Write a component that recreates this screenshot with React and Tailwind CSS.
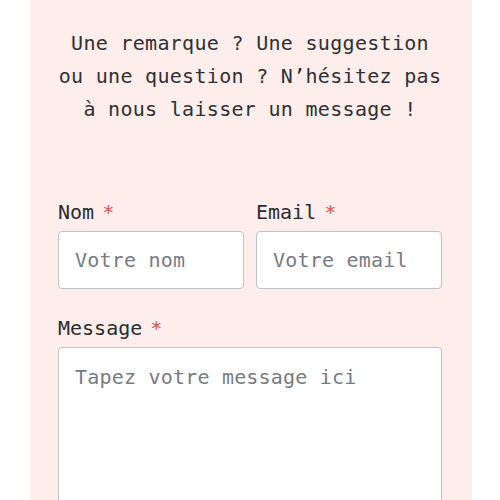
import React from "react";

function Field({ label, children, className = "" }) {
  return (
    <div className={className}>
      <label className="flex items-baseline text-[20px] leading-[28px] text-[#2b2b30] mb-[5px]">
        {label}
        <span className="ml-2 text-[#d9534f]">*</span>
      </label>
      {children}
    </div>
  );
}

function App() {
  return (
    <div className="min-h-screen bg-white font-['DejaVu_Sans_Mono','Liberation_Mono',monospace]">
      <div className="ml-[30px] w-[442px] bg-[#fdeeec] pl-[28px] pr-[30px] pt-[27px] pb-10">
        <p className="text-center whitespace-nowrap text-[20px] leading-[33px] tracking-[0.3px] text-[#303035]">
          Une remarque ? Une suggestion
          <br />
          ou une question ? N’hésitez pas
          <br />
          à nous laisser un message !
        </p>

        <form className="mt-[72px]">
          <div className="grid grid-cols-2 gap-3">
            <Field label="Nom">
              <input
                type="text"
                placeholder="Votre nom"
                className="h-[58px] w-full rounded border border-[#bfc2c9] bg-white px-4 text-[20px] tracking-[0.2px] text-[#333] placeholder:text-[#777b84] outline-none"
              />
            </Field>
            <Field label="Email">
              <input
                type="email"
                placeholder="Votre email"
                className="h-[58px] w-full rounded border border-[#bfc2c9] bg-white px-4 text-[20px] tracking-[0.2px] text-[#333] placeholder:text-[#777b84] outline-none"
              />
            </Field>
          </div>

          <Field label="Message" className="mt-[25px]">
            <textarea
              placeholder="Tapez votre message ici"
              className="block h-[200px] w-full resize-none rounded border border-[#bfc2c9] bg-white px-4 pt-[15px] text-[20px] leading-[28px] tracking-[0.2px] text-[#333] placeholder:text-[#777b84] outline-none"
            />
          </Field>
        </form>
      </div>
    </div>
  );
}

export default App;
